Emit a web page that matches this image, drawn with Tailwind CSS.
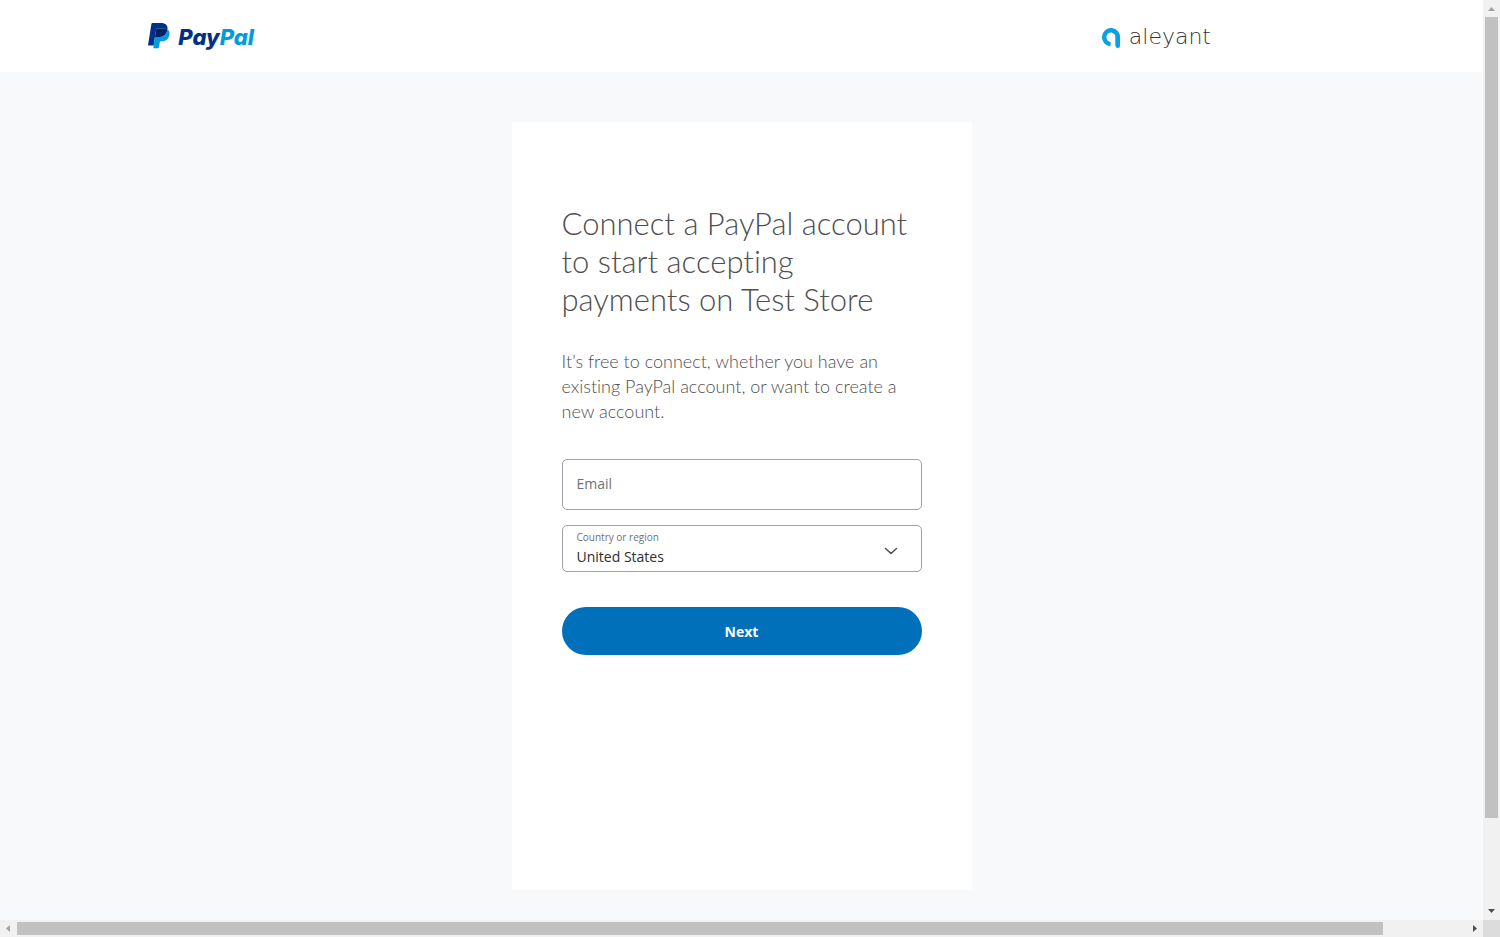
<!DOCTYPE html>
<html lang="en">
<head>
  <meta charset="UTF-8">
  <meta name="viewport" content="width=device-width, initial-scale=1.0">
  <title>PayPal</title>
  <script src="https://cdn.jsdelivr.net/npm/@tailwindcss/browser@4"></script>
</head>
<body class="grid h-screen grid-cols-[1fr_17px] grid-rows-[1fr_17px] overflow-hidden bg-[#f7f9fb] font-['Lato',sans-serif] text-[#6c7378] [font-variant-ligatures:none]">

  <div class="min-h-0 min-w-0 overflow-hidden">
    <header class="flex h-18 items-center justify-between bg-white pl-[10%] pr-[272px]">
      <a href="#" aria-label="PayPal" class="flex items-center gap-2">
        <svg class="h-[26px] w-[22px]" viewBox="0 0 26 31" aria-hidden="true">
          <path fill="#003087" d="M9.614 7.699a1.169 1.169 0 0 1 1.159-.991h7.352c.871 0 1.684.057 2.426.177a9.757 9.757 0 0 1 1.481.353c.365.121.704.264 1.017.429.368-2.347-.003-3.945-1.272-5.392C20.378.682 17.853 0 14.622 0h-9.38c-.66 0-1.223.48-1.325 1.133L.01 25.898a.806.806 0 0 0 .795.932h5.791l1.454-9.225 1.564-9.906z"/>
          <path fill="#009cde" d="M23.048 7.667c-.028.179-.06.362-.096.55-1.237 6.351-5.469 8.545-10.874 8.545H9.326c-.661 0-1.218.48-1.321 1.132L6.596 26.83l-.399 2.533a.704.704 0 0 0 .695.814h4.881c.578 0 1.069-.42 1.16-.99l.048-.248.919-5.832.059-.32c.09-.572.582-.992 1.16-.992h.73c4.729 0 8.431-1.92 9.513-7.476.452-2.321.218-4.259-.978-5.622a4.667 4.667 0 0 0-1.336-1.03z"/>
          <path fill="#012169" d="M21.754 7.151a9.757 9.757 0 0 0-1.203-.267 15.284 15.284 0 0 0-2.426-.177h-7.352a1.172 1.172 0 0 0-1.159.992L8.05 17.605l-.045.289a1.336 1.336 0 0 1 1.321-1.132h2.752c5.405 0 9.637-2.195 10.874-8.545.037-.188.068-.371.096-.55a6.594 6.594 0 0 0-1.017-.429 9.045 9.045 0 0 0-.277-.087z"/>
        </svg>
        <span class="pt-0.5 font-['Inter',sans-serif] text-[22px] leading-7 font-extrabold text-[#003087] italic">Pay<span class="text-[#009cde]">Pal</span></span>
      </a>
      <div class="flex items-center gap-2">
        <svg class="mt-1 h-5 w-5" viewBox="0 0 20 20" fill="none" stroke="#0d9fe0" stroke-width="4.500" aria-hidden="true">
          <path d="M9.500 16.200A6.800 7 0 1 1 16.800 9.300V17.700"/>
          <path d="M16.800 9V17.700" stroke-linecap="round"/>
        </svg>
        <span class="pt-0.5 font-['DejaVu_Sans',sans-serif] text-[22px] leading-7 font-extralight text-[#333435]">aleyant</span>
      </div>
    </header>

    <main class="mx-auto mt-[50px] min-h-[768px] max-w-[460px] bg-white px-[50px] pt-[82px]">
      <h1 class="text-[31px] leading-[38px] font-light text-[#4f4f4f]">Connect a PayPal account to start accepting payments on Test Store</h1>
      <p class="mt-[31px] text-[18px] leading-[25px] font-light text-[#4f4f4f]">It’s free to connect, whether you have an existing PayPal account, or want to create a new account.</p>

      <form class="mt-[35px] font-['Open_Sans',sans-serif]">
        <div class="relative">
          <input id="email" type="email" class="peer block h-[51px] w-full rounded-[5px] border border-[#9da3a6] bg-white px-3.5 text-[14px] text-[#2c2e2f]">
          <label for="email" class="absolute top-3.5 left-[15px] text-[14px] leading-[22px] text-[#6c7378] peer-focus:top-1 peer-focus:text-[10px] peer-focus:leading-4">Email</label>
        </div>

        <div class="relative mt-[15px]">
          <label for="country" class="absolute top-1 left-[15px] text-[10px] leading-4 text-[#6c7378]">Country or region</label>
          <select id="country" class="block h-[47px] w-full appearance-none rounded-[5px] border border-[#9da3a6] bg-white px-3.5 pt-4 text-[14px] text-[#2c2e2f]">
            <option>United States</option>
          </select>
          <svg class="pointer-events-none absolute top-5 right-6 h-3 w-3.5" viewBox="0 0 14 12" fill="none" stroke="#4a4d50" stroke-width="1.500" stroke-linecap="round" stroke-linejoin="round" aria-hidden="true">
            <path d="M1.500 3.500 7 8.500l5.500-5"/>
          </svg>
        </div>

        <button type="submit" class="mt-[35px] h-12 w-full rounded-3xl bg-[#0070ba] text-[14px] font-bold text-white">Next</button>
      </form>
    </main>
  </div>

  <!-- Vertical scrollbar -->
  <div class="flex flex-col bg-[#f1f1f1]">
    <svg class="h-[17px] w-[17px] shrink-0" viewBox="0 0 17 17" fill="#a3a3a3"><path d="M5 11h7L8.500 7z"/></svg>
    <div class="flex-1 px-0.5"><div class="h-[90.4%] bg-[#c1c1c1]"></div></div>
    <svg class="h-[17px] w-[17px] shrink-0" viewBox="0 0 17 17" fill="#505050"><path d="M5 6h7l-3.500 4z"/></svg>
  </div>

  <!-- Horizontal scrollbar -->
  <div class="flex bg-[#f1f1f1]">
    <svg class="h-[17px] w-[17px] shrink-0" viewBox="0 0 17 17" fill="#a3a3a3"><path d="M10 5v7L6 8.500z"/></svg>
    <div class="flex-1 py-0.5"><div class="h-full w-[94.3%] bg-[#c1c1c1]"></div></div>
    <svg class="h-[17px] w-[17px] shrink-0" viewBox="0 0 17 17" fill="#505050"><path d="M7 5v7l4-3.500z"/></svg>
  </div>
  <div class="bg-[#dcdcdc]"></div>
</body>
</html>
